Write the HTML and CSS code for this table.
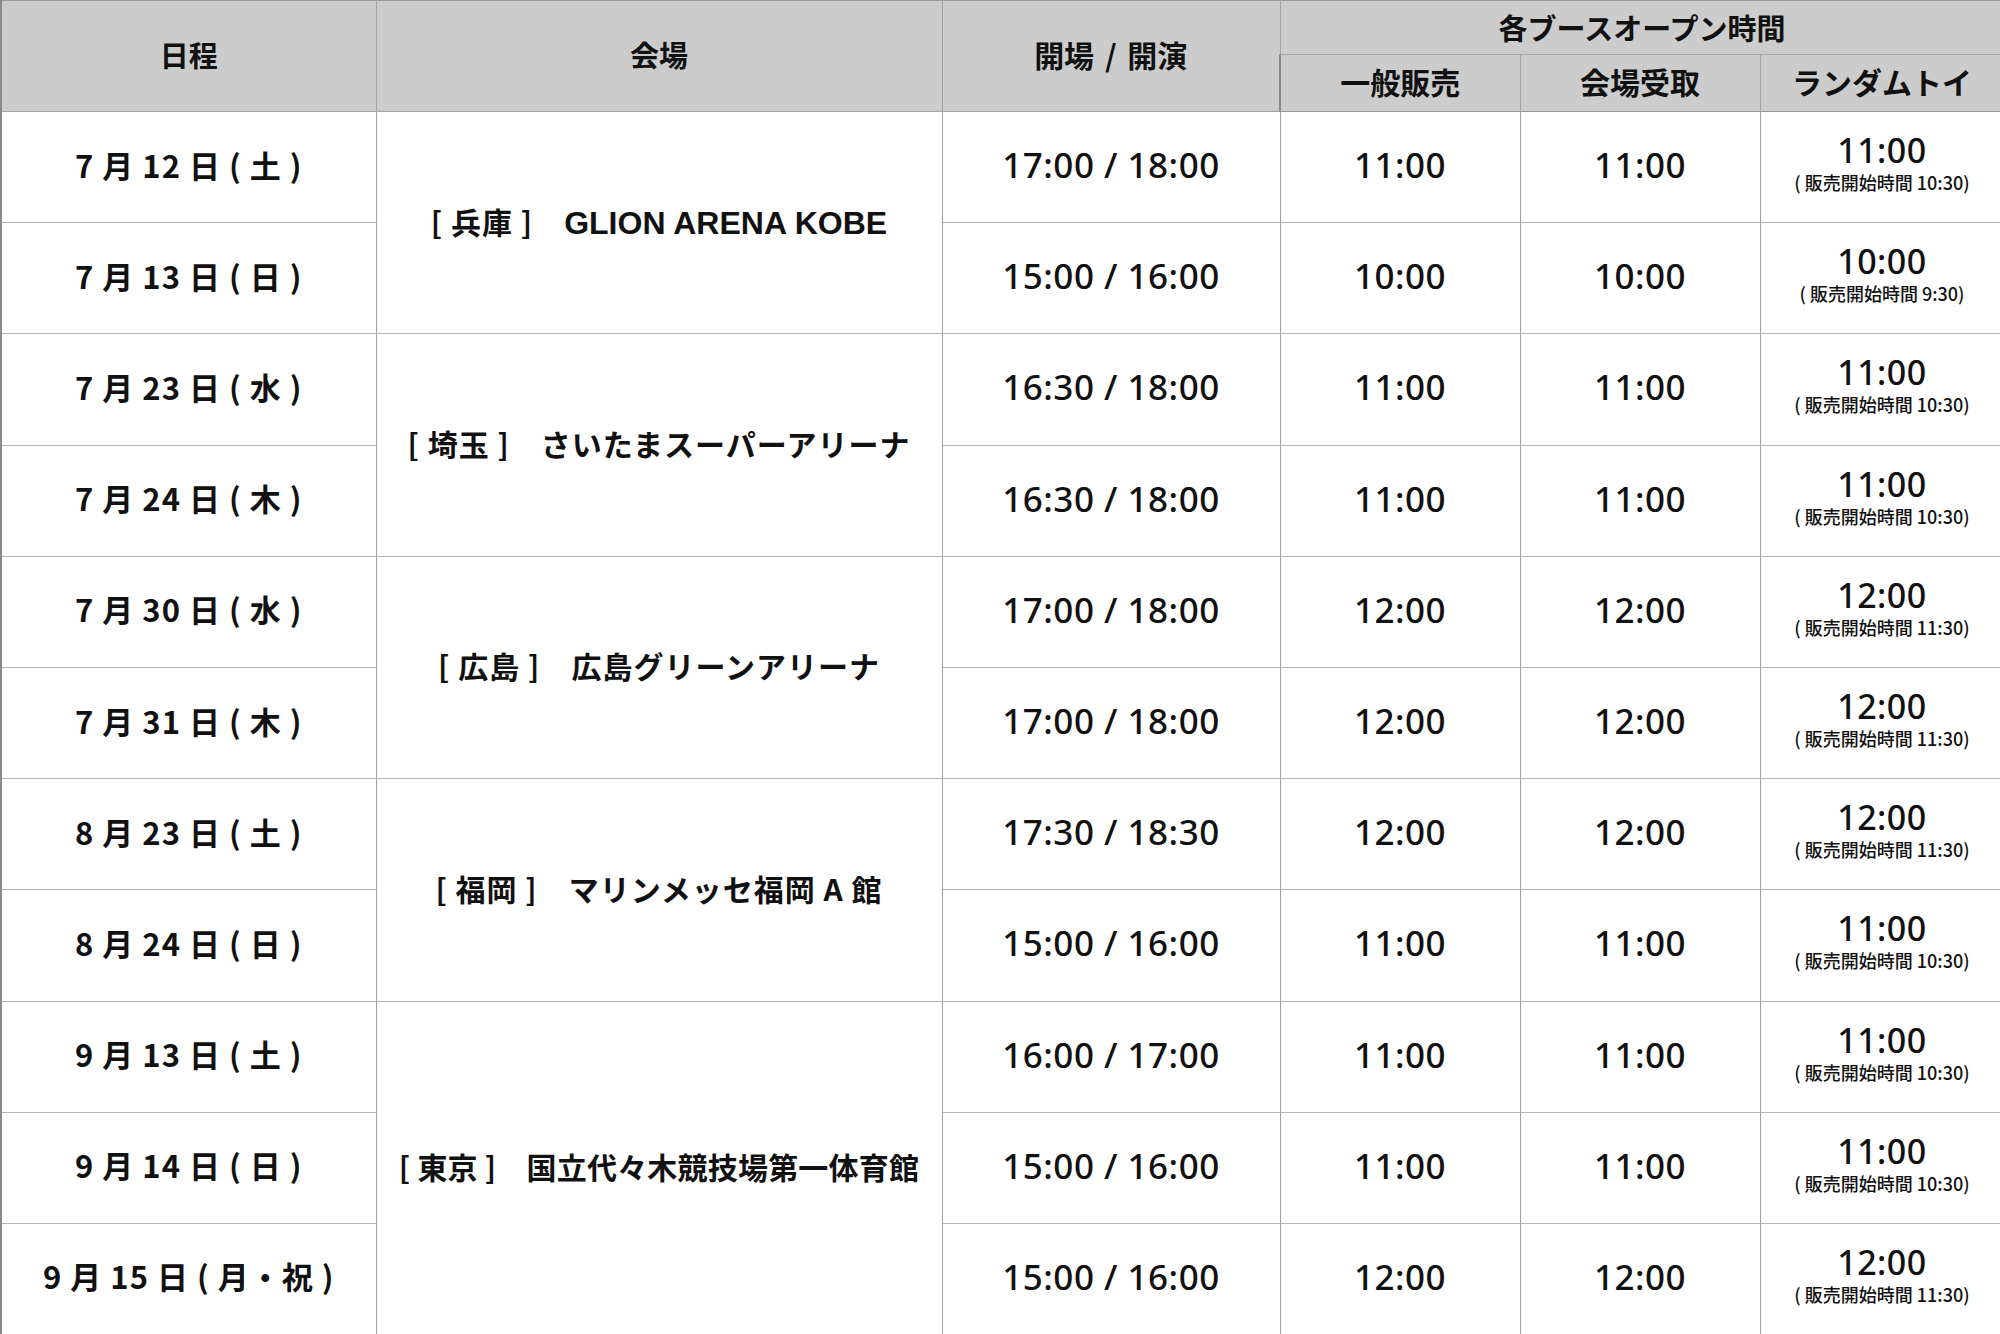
FILE: index.html
```html
<!DOCTYPE html>
<html lang="ja">
<head>
<meta charset="utf-8">
<title>スケジュール</title>
<link rel="stylesheet" href="styles.css">
</head>
<body>
<table class="sched">
  <colgroup>
    <col class="c-date"><col class="c-venue"><col class="c-open"><col class="c-b1"><col class="c-b2"><col class="c-b3">
  </colgroup>
  <thead>
    <tr class="h1">
      <th rowspan="2">日程</th>
      <th rowspan="2">会場</th>
      <th rowspan="2" class="open">開場 / 開演</th>
      <th colspan="3" class="group">各ブースオープン時間</th>
    </tr>
    <tr class="h2">
      <th>一般販売</th>
      <th>会場受取</th>
      <th>ランダムトイ</th>
    </tr>
  </thead>
  <tbody>
    <tr>
      <td class="date">7 月 12 日 ( 土 )</td>
      <td class="venue" rowspan="2">[ 兵庫 ]　<span class="lat">GLION ARENA KOBE</span></td>
      <td class="time">17:00 / 18:00</td>
      <td class="time">11:00</td>
      <td class="time">11:00</td>
      <td class="rt"><div class="t">11:00</div><div class="n">( 販売開始時間 10:30)</div></td>
    </tr>
    <tr>
      <td class="date">7 月 13 日 ( 日 )</td>
      <td class="time">15:00 / 16:00</td>
      <td class="time">10:00</td>
      <td class="time">10:00</td>
      <td class="rt"><div class="t">10:00</div><div class="n">( 販売開始時間 9:30)</div></td>
    </tr>
    <tr>
      <td class="date">7 月 23 日 ( 水 )</td>
      <td class="venue" rowspan="2">[ 埼玉 ]　さいたまスーパーアリーナ</td>
      <td class="time">16:30 / 18:00</td>
      <td class="time">11:00</td>
      <td class="time">11:00</td>
      <td class="rt"><div class="t">11:00</div><div class="n">( 販売開始時間 10:30)</div></td>
    </tr>
    <tr>
      <td class="date">7 月 24 日 ( 木 )</td>
      <td class="time">16:30 / 18:00</td>
      <td class="time">11:00</td>
      <td class="time">11:00</td>
      <td class="rt"><div class="t">11:00</div><div class="n">( 販売開始時間 10:30)</div></td>
    </tr>
    <tr>
      <td class="date">7 月 30 日 ( 水 )</td>
      <td class="venue" rowspan="2">[ 広島 ]　広島グリーンアリーナ</td>
      <td class="time">17:00 / 18:00</td>
      <td class="time">12:00</td>
      <td class="time">12:00</td>
      <td class="rt"><div class="t">12:00</div><div class="n">( 販売開始時間 11:30)</div></td>
    </tr>
    <tr>
      <td class="date">7 月 31 日 ( 木 )</td>
      <td class="time">17:00 / 18:00</td>
      <td class="time">12:00</td>
      <td class="time">12:00</td>
      <td class="rt"><div class="t">12:00</div><div class="n">( 販売開始時間 11:30)</div></td>
    </tr>
    <tr>
      <td class="date">8 月 23 日 ( 土 )</td>
      <td class="venue" rowspan="2">[ 福岡 ]　マリンメッセ福岡 A 館</td>
      <td class="time">17:30 / 18:30</td>
      <td class="time">12:00</td>
      <td class="time">12:00</td>
      <td class="rt"><div class="t">12:00</div><div class="n">( 販売開始時間 11:30)</div></td>
    </tr>
    <tr>
      <td class="date">8 月 24 日 ( 日 )</td>
      <td class="time">15:00 / 16:00</td>
      <td class="time">11:00</td>
      <td class="time">11:00</td>
      <td class="rt"><div class="t">11:00</div><div class="n">( 販売開始時間 10:30)</div></td>
    </tr>
    <tr>
      <td class="date">9 月 13 日 ( 土 )</td>
      <td class="venue tokyo" rowspan="3">[ 東京 ]　国立代々木競技場第一体育館</td>
      <td class="time">16:00 / 17:00</td>
      <td class="time">11:00</td>
      <td class="time">11:00</td>
      <td class="rt"><div class="t">11:00</div><div class="n">( 販売開始時間 10:30)</div></td>
    </tr>
    <tr>
      <td class="date">9 月 14 日 ( 日 )</td>
      <td class="time">15:00 / 16:00</td>
      <td class="time">11:00</td>
      <td class="time">11:00</td>
      <td class="rt"><div class="t">11:00</div><div class="n">( 販売開始時間 10:30)</div></td>
    </tr>
    <tr>
      <td class="date">9 月 15 日 ( 月・祝 )</td>
      <td class="time">15:00 / 16:00</td>
      <td class="time">12:00</td>
      <td class="time">12:00</td>
      <td class="rt"><div class="t">12:00</div><div class="n">( 販売開始時間 11:30)</div></td>
    </tr>
  </tbody>
</table>
</body>
</html>
```
FILE: styles.css
```css
html, body {
  margin: 0;
  padding: 0;
  background: #ffffff;
}
body {
  width: 2000px;
  height: 1334px;
  overflow: hidden;
  font-family: "Noto Sans CJK JP", "Noto Sans", sans-serif;
  color: #111;
}
.sched {
  border-collapse: collapse;
  table-layout: fixed;
  width: 2003px;
}
.c-date { width: 375px; }
.c-venue { width: 566px; }
.c-open { width: 338px; }
.c-b1 { width: 240px; }
.c-b2 { width: 240px; }
.c-b3 { width: 244px; }

.sched th, .sched td {
  padding: 0;
  text-align: center;
  vertical-align: middle;
  border-left: 1px solid #a2a2a2;
  border-right: 1px solid #a2a2a2;
  border-top: 1px solid #b4b4b4;
  border-bottom: 1px solid #b4b4b4;
}
.sched th {
  background: #cbcccb;
  font-weight: 700;
  font-size: 29px;
  color: #111;
  border-color: #a4a4a4;
}
.sched th:first-child, .sched td.date {
  border-left: 2px solid #8a8a8a;
}
.h1 { height: 54px; }
.h2 { height: 57px; }
.sched .h1 th { border-top: 1px solid #999; padding-bottom: 4px; }
.sched .h2 th { border-bottom: 1px solid #999; font-size: 30px; padding-bottom: 4px; }
.sched .h1 th.open {
  font-size: 30px;
  word-spacing: 4px;
}
.sched .h1 th.group {
  font-size: 29px;
  padding-bottom: 2px;
}

.sched tbody tr { height: 111.2px; }

.sched td.date {
  font-size: 31px;
  font-weight: 700;
  letter-spacing: 1px;
  word-spacing: 0;
  padding-bottom: 6px;
}
.sched td.venue {
  font-size: 30px;
  font-weight: 700;
  letter-spacing: 1px;
  padding-bottom: 4px;
}
.sched td.venue.tokyo { letter-spacing: 0.2px; }
.venue .lat {
  font-family: "Liberation Sans", "Noto Sans", sans-serif;
  font-size: 32px;
  letter-spacing: 0;
}
.sched td.time {
  font-family: "Noto Sans", "Noto Sans CJK JP", sans-serif;
  font-size: 35px;
  font-weight: 500;
  letter-spacing: 0.5px;
  padding-bottom: 5px;
}
.sched td.rt { padding-bottom: 10px; }
.rt .t {
  font-family: "Noto Sans", "Noto Sans CJK JP", sans-serif;
  font-size: 34px;
  font-weight: 500;
  line-height: 40px;
  letter-spacing: 0.5px;
}
.rt .n {
  font-size: 18px;
  font-weight: 500;
  line-height: 24px;
}
```
